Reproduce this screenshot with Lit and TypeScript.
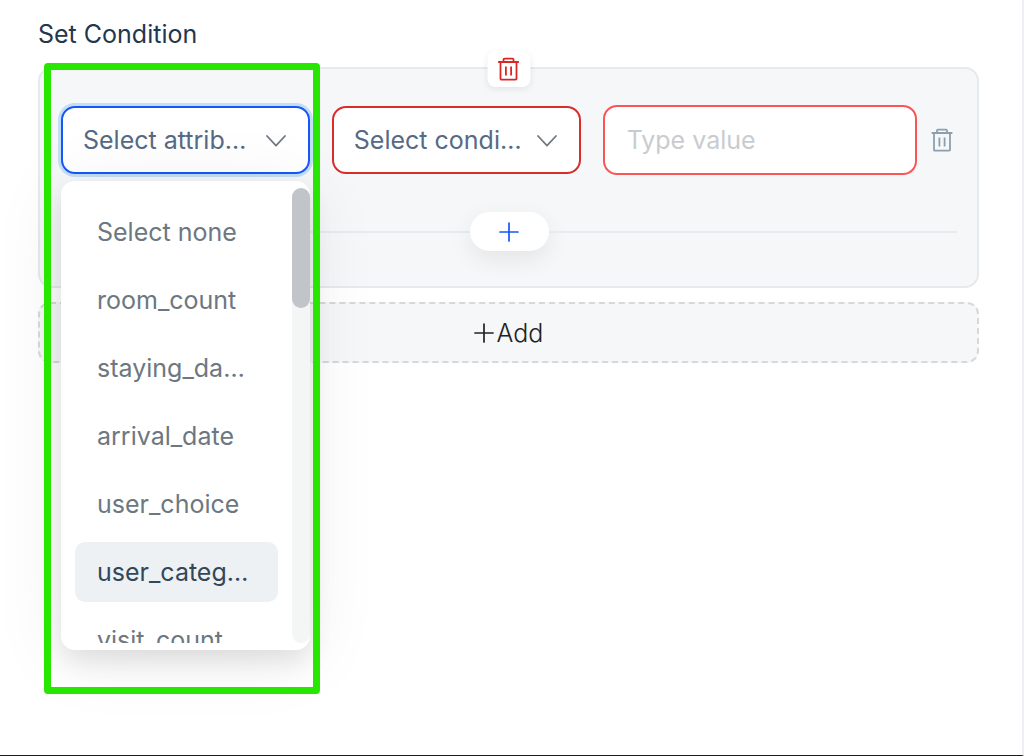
import { LitElement, html, css } from "lit";
import { customElement, state } from "lit/decorators.js";

const trashIcon = html`
  <svg class="trash" viewBox="0 0 22 24" width="22" height="24" fill="none"
    stroke="currentColor" stroke-width="1.8" stroke-linecap="round" aria-hidden="true">
    <path d="M1.3 5h19.4M6 5V2.6a1 1 0 0 1 1-1h8a1 1 0 0 1 1 1V5M3 5v16.8a.9.9 0 0 0 .9.9h14.2a.9.9 0 0 0 .9-.9V5" />
    <path stroke-linecap="butt" d="M8.4 9.5v9M13.6 9.5v9" />
  </svg>`;

const chevronIcon = html`
  <svg class="chevron" viewBox="0 0 20 12" width="20" height="12" fill="none"
    stroke="currentColor" stroke-width="1.8" stroke-linecap="round" stroke-linejoin="round" aria-hidden="true">
    <path d="M1 1l9 9.6L19 1" />
  </svg>`;

const plusIcon = html`
  <svg viewBox="0 0 20 20" width="20" height="20" fill="none"
    stroke="currentColor" stroke-width="1.7" stroke-linecap="round" aria-hidden="true">
    <path d="M10 1v18M1 10h18" />
  </svg>`;

@customElement("app-root")
export class AppRoot extends LitElement {
  static styles = css`
    :host {
      display: block;
      font-family: Inter, "Liberation Sans", sans-serif;
      font-size: 25px;
      font-weight: 400;
      line-height: 32px;
    }
    * {
      box-sizing: border-box;
    }
    button,
    select,
    input {
      font: inherit;
      margin: 0;
    }
    button {
      border: 0;
      padding: 0;
      background: none;
      cursor: pointer;
    }
    svg {
      display: block;
      flex: none;
    }
    .page {
      min-height: 100vh;
      padding: 18px 43px 18px 38px;
      border-right: 2px solid #edf1f5;
      border-bottom: 1px solid #1c1c1c;
      background: #fff;
      overflow: hidden;
    }
    .title {
      margin: 0 0 17px;
      font-size: 25px;
      font-weight: 400;
      line-height: 32px;
      color: #23374d;
    }
    .group {
      position: relative;
      padding: 36px 20px 35px 21px;
      border: 2px solid #e6eaed;
      border-radius: 14px;
      background: #f5f7f9;
    }
    .remove-group {
      position: absolute;
      top: -18px;
      left: 50%;
      display: grid;
      place-items: center;
      width: 43px;
      height: 36px;
      transform: translateX(-50%);
      border-radius: 8px;
      background: #fff;
      color: #dc2626;
      box-shadow: 0 2px 6px rgba(0, 0, 0, 0.08);
    }
    .row {
      display: flex;
      align-items: center;
      gap: 14px;
    }
    .fields {
      flex: 1;
      display: grid;
      grid-template-columns: 19fr 19fr 24fr;
      align-items: center;
      gap: 22px;
    }
    .field {
      position: relative;
      display: grid;
      min-width: 0;
    }
    .select,
    .value {
      width: 100%;
      min-width: 0;
      border-radius: 14px;
      background: #fff;
      outline: none;
    }
    .select {
      height: 68px;
      padding: 0 54px 0 20px;
      border: 2px solid #d92d2d;
      appearance: none;
      color: #566a84;
      text-overflow: ellipsis;
      white-space: nowrap;
      overflow: hidden;
    }
    .select.open {
      border-color: #1557f8;
      box-shadow: 0 0 0 3px #c3dff5;
    }
    .chevron {
      position: absolute;
      top: 29px;
      right: 24px;
      color: #6f7a85;
      pointer-events: none;
    }
    .value {
      height: 70px;
      padding: 0 22px;
      border: 2px solid #fb5558;
      color: #23374d;
    }
    .value::placeholder {
      color: #c9cccf;
      opacity: 1;
    }
    .remove-row {
      width: 26px;
      color: #8d9fae;
    }
    .menu {
      position: absolute;
      z-index: 2;
      top: calc(100% + 7px);
      left: 0;
      right: 0;
      display: flex;
      height: 469px;
      padding: 7px 0;
      border-radius: 14px;
      background: #fff;
      box-shadow: 0 12px 24px rgba(0, 0, 0, 0.09), 0 8px 72px rgba(0, 0, 0, 0.08);
    }
    .options {
      flex: 1;
      min-width: 0;
      display: flex;
      flex-direction: column;
      gap: 8px;
      margin: 0;
      padding: 14px;
      overflow: hidden;
      list-style: none;
    }
    .option {
      flex: none;
      padding: 14px 28px 14px 22px;
      border-radius: 10px;
      color: #6d7780;
      overflow: hidden;
      text-overflow: ellipsis;
      white-space: nowrap;
      cursor: pointer;
    }
    .option.active {
      background: #edf1f4;
      color: #33475b;
    }
    .track {
      width: 18px;
      border-radius: 9px;
      background: #f4f6f6;
    }
    .thumb {
      height: 120px;
      border-radius: 9px;
      background: #c1c4c8;
    }
    .highlight {
      position: absolute;
      z-index: 3;
      top: -43px;
      left: -17px;
      right: -10px;
      height: 631px;
      border: 7px solid #27e600;
      border-radius: 4px;
      pointer-events: none;
    }
    .more {
      display: grid;
      grid-template-columns: 1fr auto 1fr;
      align-items: center;
      margin-top: 37px;
    }
    .rule {
      height: 2px;
      background: #e8ebee;
    }
    .and {
      display: grid;
      place-items: center;
      width: 79px;
      height: 39px;
      border-radius: 20px;
      background: #fff;
      color: #1557f8;
      box-shadow: 0 8px 24px rgba(0, 0, 0, 0.08);
    }
    .add {
      display: flex;
      align-items: center;
      justify-content: center;
      gap: 3px;
      width: 100%;
      height: 61px;
      margin-top: 14px;
      border: 2px dashed #d6d9dc;
      border-radius: 12px;
      background: #f5f7f9;
      font-weight: 300;
      color: #222;
    }
  `;

  @state() private active = "user_category";

  private names = [
    "Select none",
    "room_count",
    "staying_dates",
    "arrival_date",
    "user_choice",
    "user_category",
    "visit_count",
  ];

  render() {
    return html`
      <main class="page">
        <h1 class="title">Set Condition</h1>
        <section class="group">
          <button class="remove-group" aria-label="Remove group">${trashIcon}</button>
          <div class="row">
            <div class="fields">
              <div class="field">
                <select class="select open" aria-label="Attribute">
                  <option>Select attribute</option>
                </select>
                ${chevronIcon}
                <div class="menu">
                  <ul class="options" role="listbox" aria-label="Attributes">
                    ${this.names.map(
                      (name) => html`<li
                        class="option ${name === this.active ? "active" : ""}"
                        role="option"
                        aria-selected=${name === this.active}
                        @mouseenter=${() => (this.active = name)}
                      >${name}</li>`
                    )}
                  </ul>
                  <div class="track"><div class="thumb"></div></div>
                </div>
                <div class="highlight"></div>
              </div>
              <div class="field">
                <select class="select" aria-label="Condition">
                  <option>Select condition</option>
                </select>
                ${chevronIcon}
              </div>
              <input class="value" type="text" placeholder="Type value" aria-label="Value" />
            </div>
            <button class="remove-row" aria-label="Remove condition">${trashIcon}</button>
          </div>
          <div class="more">
            <span class="rule"></span>
            <button class="and" aria-label="Add condition">${plusIcon}</button>
            <span class="rule"></span>
          </div>
        </section>
        <button class="add">${plusIcon}<span>Add</span></button>
      </main>
    `;
  }
}
